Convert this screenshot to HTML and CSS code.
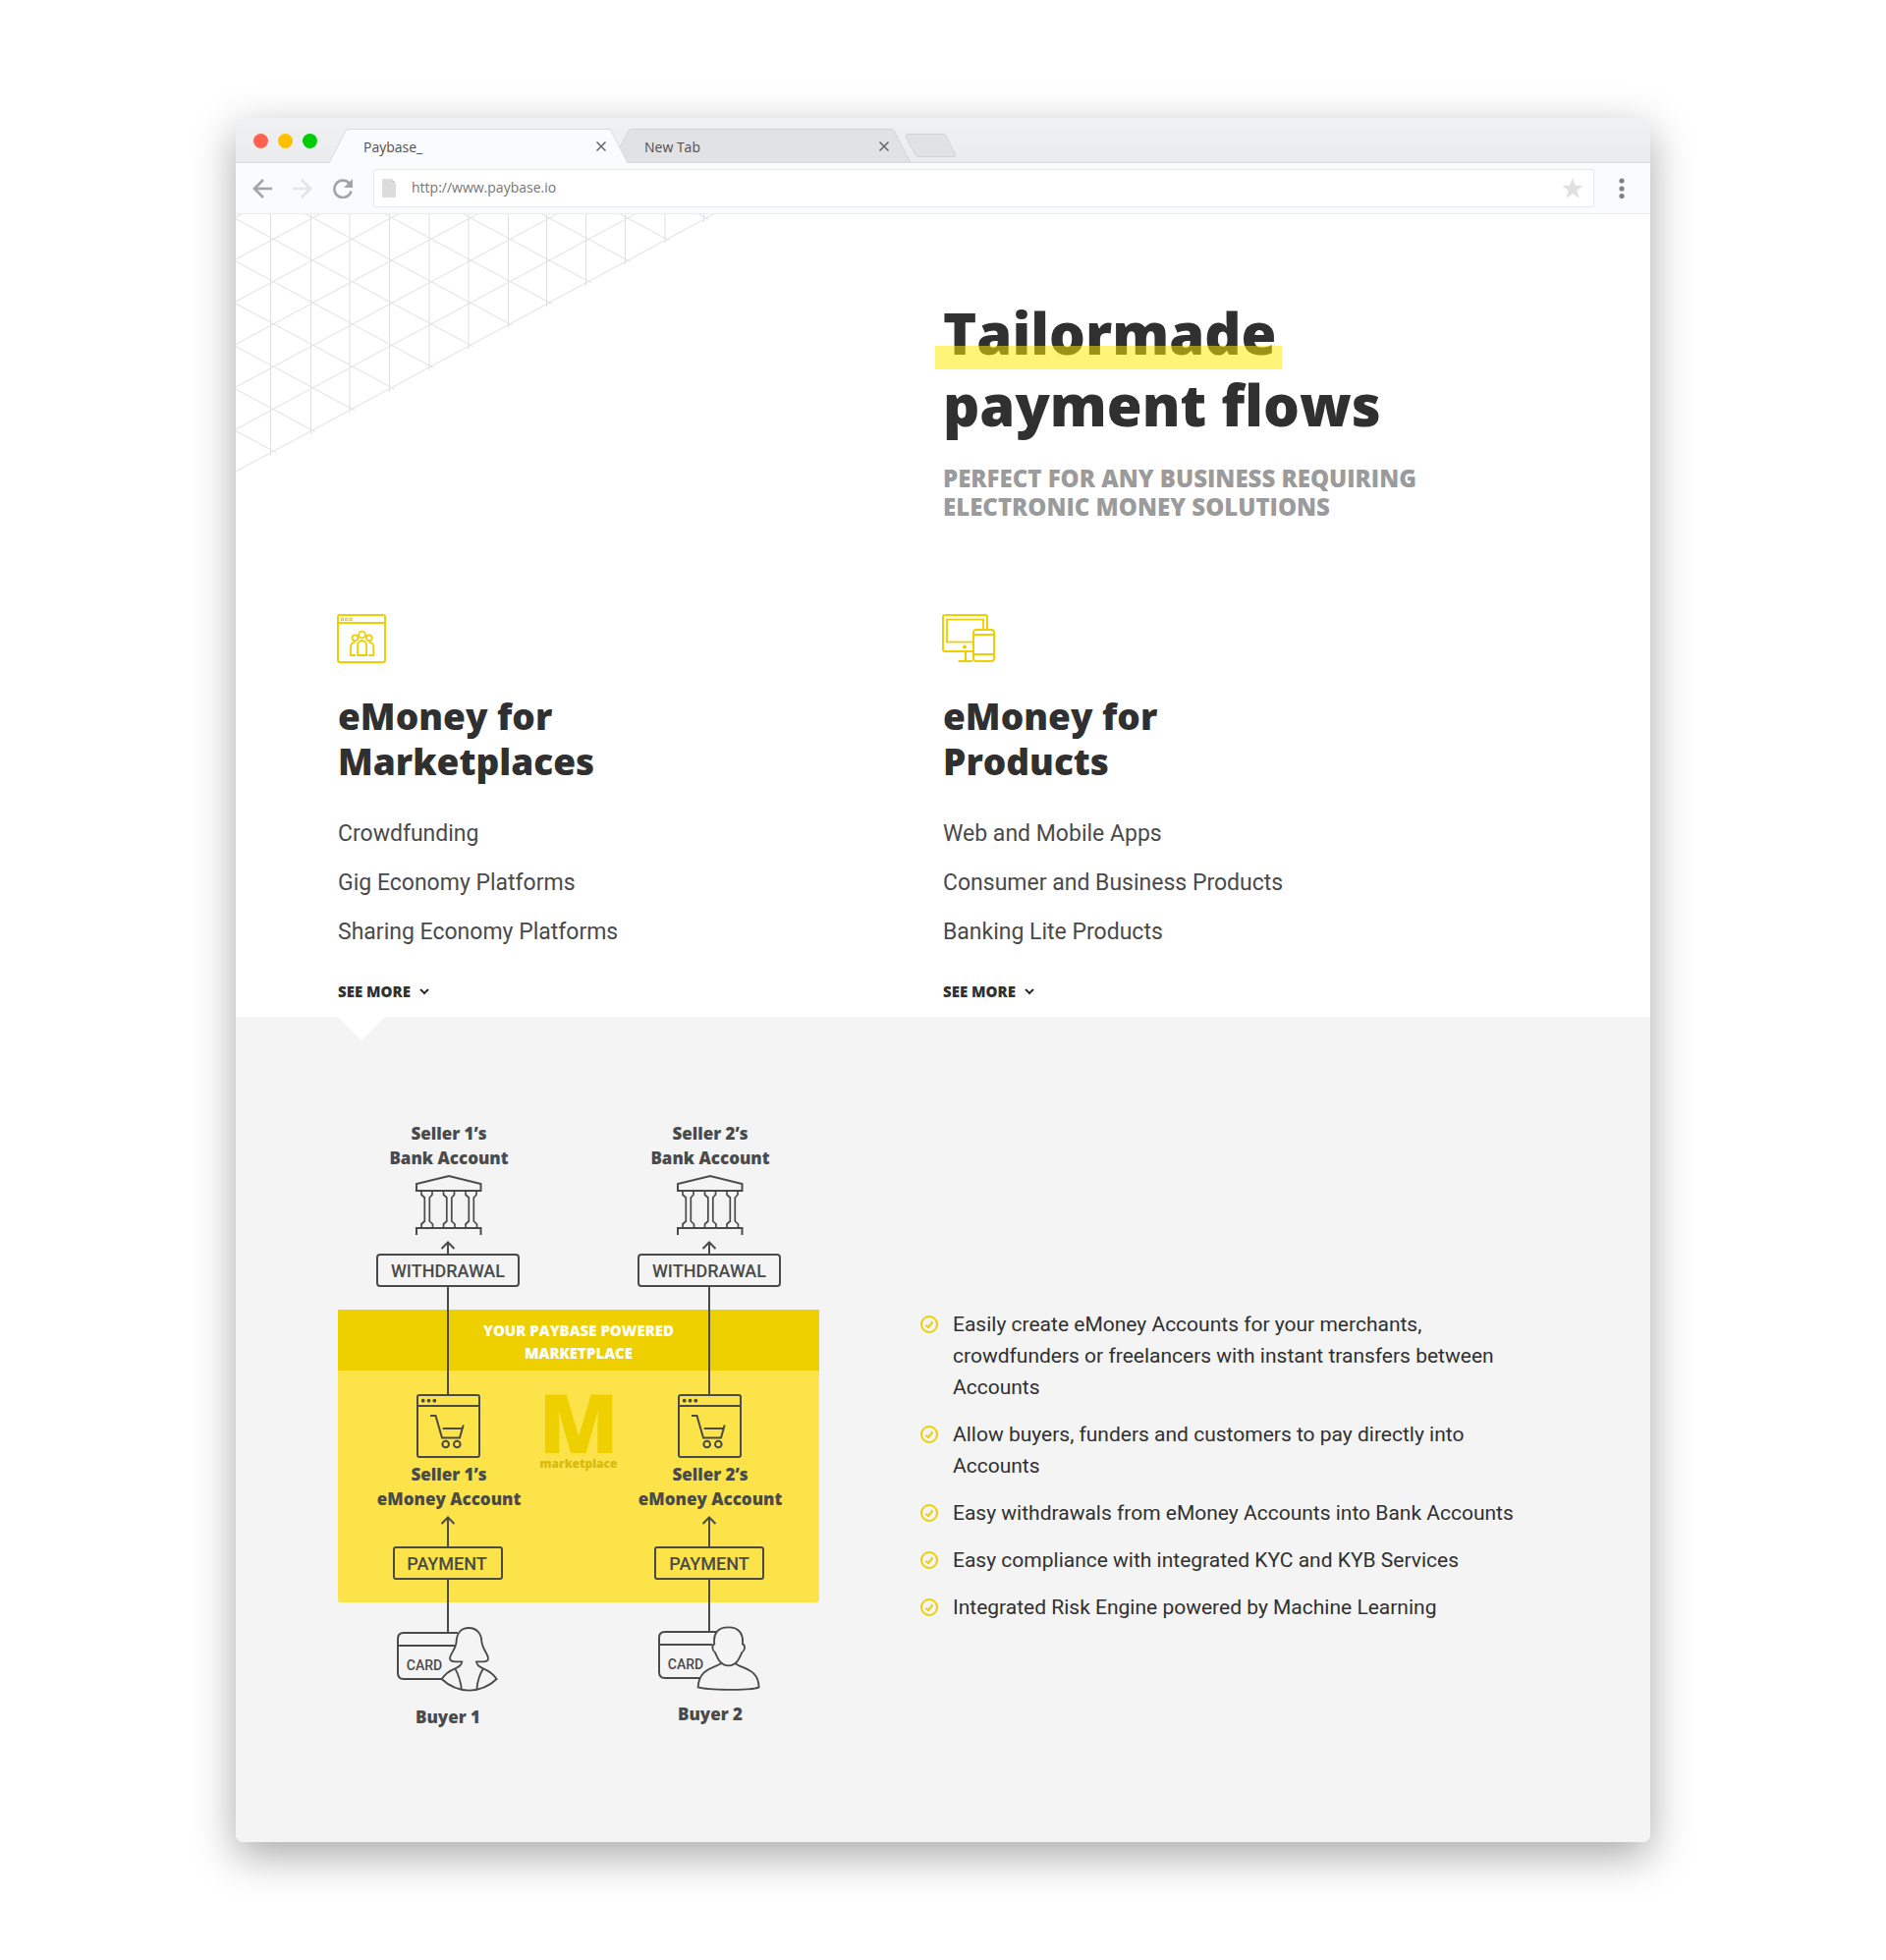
FILE: index.html
```html
<!DOCTYPE html>
<html lang="en">
<head>
<meta charset="utf-8">
<meta name="viewport" content="width=device-width, initial-scale=1">
<title>Paybase_</title>
<link rel="stylesheet" href="styles.css">
</head>
<body>
<div class="window">
  <header class="tabbar">
    <div class="lights"><span class="light red"></span><span class="light amber"></span><span class="light green"></span></div>
    <div class="tabs">
      <div class="tab tab-active">
        <svg class="tab-shape" viewBox="0 0 304 35" preserveAspectRatio="none" aria-hidden="true"><path d="M0 35L17 2Q18 .5 20 .5H284Q286 .5 287 2L304 35Z" fill="#fafbfd"/><path d="M0 35L17 2Q18 .5 20 .5H284Q286 .5 287 2L304 35" fill="none" stroke="#d9dadb"/></svg>
        <span class="tab-title">Paybase_</span>
        <button class="tab-close" aria-label="Close tab"><svg width="10" height="10" viewBox="0 0 10 10"><path d="M.5.5l9 9M9.500.5l-9 9" stroke="#666" stroke-width="1.500"/></svg></button>
      </div>
      <div class="tab">
        <svg class="tab-shape" viewBox="0 0 304 35" preserveAspectRatio="none" aria-hidden="true"><path d="M0 35L17 2Q18 .5 20 .5H284Q286 .5 287 2L304 35Z" fill="#e1e2e4" stroke="#d2d3d5"/></svg>
        <span class="tab-title">New Tab</span>
        <button class="tab-close" aria-label="Close tab"><svg width="10" height="10" viewBox="0 0 10 10"><path d="M.5.5l9 9M9.500.5l-9 9" stroke="#666" stroke-width="1.500"/></svg></button>
      </div>
      <button class="tab-new" aria-label="Open a new tab"><svg width="53" height="24" viewBox="0 0 53 24"><path d="M3 .5H39Q41 .5 42 2L51.500 21Q52 23.500 50 23.500H14Q12 23.500 11 22L1 3Q.5 .5 3 .5Z" fill="#e1e2e4" stroke="#d2d3d5"/></svg></button>
    </div>
  </header>
  <div class="toolbar">
    <button class="tool" aria-label="Back"><svg width="20" height="20" viewBox="0 0 20 20"><path d="M20 10H2M11 1L2 10l9 9" fill="none" stroke="#a3a4a6" stroke-width="2.600"/></svg></button>
    <button class="tool tool-next" aria-label="Forward"><svg width="20" height="20" viewBox="0 0 20 20"><path d="M0 10h18M9 1l9 9-9 9" fill="none" stroke="#e3e4e6" stroke-width="2.600"/></svg></button>
    <button class="tool" aria-label="Reload"><svg width="20" height="20" viewBox="0 0 20 20"><path d="M16.500 4.500A8.700 8.700 0 1 0 18.500 12.500" fill="none" stroke="#a3a4a6" stroke-width="2.600"/><path d="M20 0V9H11Z" fill="#a3a4a6"/></svg></button>
    <div class="address">
      <svg width="14" height="19" viewBox="0 0 14 19" aria-hidden="true"><path d="M0 0H9V5H14V19H0Z" fill="#dcdcdc"/><path d="M9.500 0L14 4.500H9.500Z" fill="#c6c6c6"/></svg>
      <input class="url" type="text" value="http://www.paybase.io" aria-label="Address">
      <svg width="22" height="21" viewBox="0 0 22 21" aria-hidden="true"><path d="M11 0l2.700 7.700 8.100.2-6.500 4.900 2.400 8L11 16l-6.700 4.800 2.400-8L.2 7.900l8.100-.2Z" fill="#dfe0e2"/></svg>
    </div>
    <button class="tool tool-menu" aria-label="Menu"><svg width="6" height="22" viewBox="0 0 6 22"><g fill="#808183"><circle cx="3" cy="3" r="2.600"/><circle cx="3" cy="11" r="2.600"/><circle cx="3" cy="18.500" r="2.600"/></g></svg></button>
  </div>

  <main>
    <section class="intro">
      <svg class="mesh" width="490" height="266" viewBox="0 0 490 266" aria-hidden="true">
        <clipPath id="corner"><path d="M0 0H490V1L0 265Z"/></clipPath>
        <g clip-path="url(#corner)" fill="none" stroke="#e0e0e0">
          <path d="M35.500 0V266M76.500 0V266M116 0V266M156.500 0V266M197 0V266M237 0V266M277.500 0V266M316.500 0V266M356.500 0V266M396.500 0V266M437 0V266M476.500 0V266"/>
          <path d="M0 3l490-264M0 46l490-264M0 89l490-264M0 132.500l490-264M0 176l490-264M0 219l490-264M0 262l490-264"/>
          <path d="M0-254l490 264M0-211l490 264M0-168l490 264M0-125l490 264M0-82l490 264M0-38.500l490 264M0 4.700l490 264M0 48l490 264M0 91l490 264M0 134.500l490 264M0 178l490 264M0 220.500l490 264"/>
        </g>
      </svg>
      <div class="hero">
        <h1><span class="mark">Tailormade</span><br>payment flows</h1>
        <p class="lead">Perfect for any business requiring<br>electronic money solutions</p>
      </div>
      <div class="offers">
        <article class="offer">
          <svg class="offer-icon" width="50" height="50" viewBox="1 0 50 50" aria-hidden="true"><g fill="none" stroke="#eecf00" stroke-width="2"><rect x="1" y="1" width="48" height="48" rx="2"/><path d="M1 9H49"/><g stroke-width="1.300"><circle cx="5.500" cy="5.400" r="1.200"/><circle cx="9.700" cy="5.400" r="1.200"/><circle cx="14" cy="5.400" r="1.200"/></g><g stroke-width="1.800"><circle cx="25.600" cy="21" r="3.400"/><circle cx="18.400" cy="24.200" r="2.900"/><circle cx="32.800" cy="24.200" r="2.900"/><path d="M21.100 42V31.500a4.500 4.500 0 0 1 9 0V42Z"/><path d="M19 42H14V34Q14 29 18.500 28.600M32.200 42H37.200V34Q37.200 29 32.700 28.600"/></g></g></svg>
          <h2>eMoney for<br>Marketplaces</h2>
          <ul class="uses"><li>Crowdfunding</li><li>Gig Economy Platforms</li><li>Sharing Economy Platforms</li></ul>
          <button class="more">See more <svg width="10" height="7" viewBox="0 0 10 7" aria-hidden="true"><path d="M1 1l4 4 4-4" fill="none" stroke="#303030" stroke-width="2"/></svg></button>
        </article>
        <article class="offer">
          <svg class="offer-icon" width="54" height="50" viewBox="1 0 54 50" aria-hidden="true"><g fill="none" stroke="#eecf00" stroke-width="2"><rect x="1" y="1" width="45" height="37" rx="2"/><rect x="5" y="5.500" width="37" height="23" stroke-width="1.800"/><path d="M24 38V48M16.500 48H31"/><rect x="32" y="16" width="21" height="32" rx="3" fill="#fff"/><path d="M32 21H53M32 41H53"/></g><circle cx="23" cy="33.500" r="2.100" fill="#eecf00"/></svg>
          <h2>eMoney for<br>Products</h2>
          <ul class="uses"><li>Web and Mobile Apps</li><li>Consumer and Business Products</li><li>Banking Lite Products</li></ul>
          <button class="more">See more <svg width="10" height="7" viewBox="0 0 10 7" aria-hidden="true"><path d="M1 1l4 4 4-4" fill="none" stroke="#303030" stroke-width="2"/></svg></button>
        </article>
      </div>
    </section>

    <section class="details">
      <svg class="flow" width="490" height="630" viewBox="0 0 490 630" role="img" aria-label="How money flows from buyers to sellers">
        <defs>
          <g id="bank"><path d="M80 72V65L113 57L145.500 65V72ZM80 117V110H145.500V117"/>
            <g id="column"><path stroke-width="1.700" d="M85 73V76L88.300 79V103L85 106V110M96 73V76L93.300 79V103L96.500 106V110"/></g>
            <use href="#column" x="22.500"/><use href="#column" x="45"/></g>
          <g id="shop"><rect x="81" y="280" width="63" height="63" rx="2"/><path d="M81 291H144M94 301H99.500L106 323.500H124L127.700 310.500M106.700 314H126"/><circle cx="109.700" cy="330" r="3.300"/><circle cx="121.300" cy="330" r="3.300"/><g fill="#4a4a4a" stroke="none"><circle cx="86.700" cy="285.700" r="1.900"/><circle cx="92.500" cy="285.700" r="1.900"/><circle cx="98.300" cy="285.700" r="1.900"/></g></g>
          <g id="steps"><path d="M105.500 131L112 124.500L118.500 131M112 124.500V137M112 169V280M105.500 411L112 404.500L118.500 411M112 404.500V435M112 467V522"/><rect x="40" y="137" width="144" height="32" rx="3"/><rect x="57" y="435" width="110" height="32" rx="2"/></g>
          <path id="card" d="M122 522H67Q61 522 61 528V563Q61 569 67 569H106M61 535H119"/>
          <path id="card-short" d="M119 522H67Q61 522 61 528V563Q61 569 67 569H102M61 535H115"/>
        </defs>
        <path d="M0 255H490V488Q490 491 487 491H3Q0 491 0 488Z" fill="#fbe349"/>
        <path d="M0 193H490V255H0Z" fill="#eecf00"/>
        <g class="lines">
          <use href="#bank"/><use href="#bank" x="266"/>
          <use href="#shop"/><use href="#shop" x="266"/>
          <use href="#steps"/><use href="#steps" x="266"/>
          <use href="#card"/><use href="#card-short" x="266" y="-1"/>
          <g transform="translate(-14 480) scale(.3333)" stroke-width="5.500">
            <path d="M442 111C418 111 405 128 404 152C403 175 384 192 384 204C384 212 392 214 402 214H421C421 222 414 229 400 235C380 243 367 255 359 267C380 287 410 301 443 302C476 301 506 287 527 267C519 255 505 243 486 235C472 229 465 222 465 214H484C494 214 502 212 501 203C500 190 483 175 481 152C480 128 466 111 442 111ZM400 235C411 255 417 275 420 299M486 235C474 255 468 275 466 299"/>
            <path d="M1192 160C1188 130 1200 109 1235 109C1268 109 1281 130 1278 160C1287 163 1286 180 1276 186C1268 204 1260 226 1235 226C1210 226 1202 204 1194 186C1184 180 1184 163 1192 160ZM1213 219C1190 235 1145 235 1142 292C1170 300 1300 304 1328 292C1326 235 1280 238 1255 219"/>
          </g>
        </g>
        <g class="node">
          <text x="113" y="20">Seller 1’s</text><text x="113" y="45">Bank Account</text>
          <text x="379" y="20">Seller 2’s</text><text x="379" y="45">Bank Account</text>
          <text x="113" y="367">Seller 1’s</text><text x="113" y="392">eMoney Account</text>
          <text x="379" y="367">Seller 2’s</text><text x="379" y="392">eMoney Account</text>
          <text x="112" y="614">Buyer 1</text><text x="379" y="611">Buyer 2</text>
        </g>
        <g class="step">
          <text x="112" y="160">WITHDRAWAL</text><text x="378" y="160">WITHDRAWAL</text>
          <text x="111" y="458">PAYMENT</text><text x="378" y="458">PAYMENT</text>
        </g>
        <g class="card-label"><text x="88" y="560">CARD</text><text x="354" y="559">CARD</text></g>
        <g class="banner"><text x="245" y="220">YOUR PAYBASE POWERED</text><text x="245" y="243">MARKETPLACE</text></g>
        <text class="brand-letter" x="245" y="339">M</text>
        <text class="brand-name" x="245" y="354">marketplace</text>
      </svg>
      <ul class="benefits">
        <li><svg class="tick" viewBox="0 0 18 18" aria-hidden="true"><circle cx="9" cy="9" r="8"/><path d="M5.500 9.700L8 12L12.500 6.500"/></svg>Easily create eMoney Accounts for your merchants, crowdfunders or freelancers with instant transfers between Accounts</li>
        <li><svg class="tick" viewBox="0 0 18 18" aria-hidden="true"><circle cx="9" cy="9" r="8"/><path d="M5.500 9.700L8 12L12.500 6.500"/></svg>Allow buyers, funders and customers to pay directly into Accounts</li>
        <li><svg class="tick" viewBox="0 0 18 18" aria-hidden="true"><circle cx="9" cy="9" r="8"/><path d="M5.500 9.700L8 12L12.500 6.500"/></svg>Easy withdrawals from eMoney Accounts into Bank Accounts</li>
        <li><svg class="tick" viewBox="0 0 18 18" aria-hidden="true"><circle cx="9" cy="9" r="8"/><path d="M5.500 9.700L8 12L12.500 6.500"/></svg>Easy compliance with integrated KYC and KYB Services</li>
        <li><svg class="tick" viewBox="0 0 18 18" aria-hidden="true"><circle cx="9" cy="9" r="8"/><path d="M5.500 9.700L8 12L12.500 6.500"/></svg>Integrated Risk Engine powered by Machine Learning</li>
      </ul>
    </section>
  </main>
</div>
</body>
</html>
```

FILE: styles.css
```css
* { box-sizing: border-box; }

body {
  margin: 0;
  padding: 120px 12.5%;
  background: #fff;
  color: #303030;
  font-family: Roboto, "Liberation Sans", sans-serif;
}

h1, h2, p, ul { margin: 0; }
ul { padding: 0; list-style: none; }
svg { display: block; flex: none; }
button {
  padding: 0;
  border: 0;
  background: none;
  color: inherit;
  font: inherit;
  cursor: pointer;
}

.window {
  border-radius: 8px;
  background: #fff;
  box-shadow: 0 14px 44px rgba(0, 0, 0, 0.34);
}

/* Browser chrome */
.tabbar {
  display: flex;
  height: 46px;
  padding-left: 18px;
  border-bottom: 1px solid #d9dadb;
  border-radius: 8px 8px 0 0;
  background: linear-gradient(#f0f1f3, #ebecee);
}
.lights { display: flex; gap: 10px; padding-top: 16px; }
.light { width: 15px; height: 15px; border-radius: 50%; }
.red { background: #ff6250; }
.amber { background: #ffc000; }
.green { background: #00cc08; }

.tabs { display: flex; align-items: flex-end; margin: 0 0 -1px 12px; }
.tab {
  position: relative;
  display: flex;
  align-items: center;
  justify-content: space-between;
  width: 304px;
  height: 35px;
  padding: 2px 22px 0 35px;
}
.tab + .tab { margin-left: -16px; padding-left: 33px; }
.tab-active { z-index: 1; }
.tab-shape { position: absolute; inset: 0; width: 100%; height: 100%; }
.tab-title, .tab-close { position: relative; }
.tab-title { color: #505050; font: 14px/20px "Open Sans", sans-serif; }
.tab-close { padding-bottom: 2px; }
.tab-new { align-self: flex-end; margin: 0 0 6px -6px; }

.toolbar {
  display: flex;
  align-items: center;
  gap: 21px;
  height: 52px;
  padding: 0 26px 0 17px;
  border-bottom: 1px solid #ececec;
  background: #fafbfd;
}
.tool-menu { margin-left: 4px; }
.address {
  display: flex;
  flex: 1;
  align-items: center;
  gap: 16px;
  height: 39px;
  padding: 0 10px 0 8px;
  border: 1px solid #e6e7e8;
  border-radius: 2px;
  background: #fff;
}
.url {
  flex: 1;
  min-width: 0;
  padding: 0 0 1px;
  border: 0;
  outline: 0;
  background: none;
  color: #757575;
  font: 14px/20px "Open Sans", sans-serif;
}

/* Page */
.intro { position: relative; padding: 84px 104px 16px; }
.mesh { position: absolute; top: 0; left: 0; }
.hero { position: relative; margin-left: 50%; }

h1, h2, .lead, .more { font-family: "Open Sans", sans-serif; font-weight: 800; }
h1 { font-size: 58px; line-height: 73px; }
.mark { position: relative; }
.mark::after {
  content: "";
  position: absolute;
  right: -6px;
  bottom: 2px;
  left: -8px;
  height: 24px;
  background: rgba(255, 232, 0, 0.53);
}
.lead {
  margin-top: 24px;
  color: #9b9b9b;
  font-size: 24px;
  line-height: 29px;
  text-transform: uppercase;
}

.offers {
  display: grid;
  grid-template-columns: 1fr 1fr;
  margin-top: 95px;
}
.offer-icon { overflow: visible; }
h2 { margin-top: 31px; font-size: 37px; line-height: 46px; }
.uses {
  display: grid;
  gap: 24px;
  margin-top: 38px;
  color: #4a4a4a;
  font-size: 23px;
  line-height: 26px;
}
.more {
  display: flex;
  align-items: center;
  gap: 9px;
  margin-top: 37px;
  font-size: 15px;
  line-height: 20px;
  text-transform: uppercase;
}

.details {
  position: relative;
  display: flex;
  align-items: flex-start;
  gap: 103px;
  padding: 105px 104px;
  border-radius: 0 0 8px 8px;
  background: #f4f4f4;
}
.details::before {
  content: "";
  position: absolute;
  top: 0;
  left: 104px;
  width: 48px;
  height: 24px;
  background: #fff;
  clip-path: polygon(0 0, 100% 0, 50% 100%);
}

.flow text { text-anchor: middle; }
.lines { fill: none; stroke: #4a4a4a; stroke-width: 2; }
.node { fill: #4a4a4a; font: 800 17px "Open Sans", sans-serif; }
.step { fill: #4a4a4a; font: 500 18px Roboto, sans-serif; }
.card-label { fill: #4a4a4a; font: 500 14px Roboto, sans-serif; }
.banner { fill: #fff; font: 800 15px "Open Sans", sans-serif; }
.brand-letter { fill: #eecf00; font: 800 84px "Open Sans", sans-serif; }
.brand-name { fill: #d8ba0f; font: 800 12px "Open Sans", sans-serif; }

.benefits {
  display: grid;
  flex: 1;
  gap: 16px;
  margin-top: 192px;
  padding-right: 24px;
  font-size: 21px;
  line-height: 32px;
}
.benefits li { position: relative; padding-left: 33px; }
.tick {
  position: absolute;
  top: 7px;
  left: 0;
  width: 18px;
  height: 18px;
  fill: none;
  stroke: #eecf00;
  stroke-width: 2;
}
```
